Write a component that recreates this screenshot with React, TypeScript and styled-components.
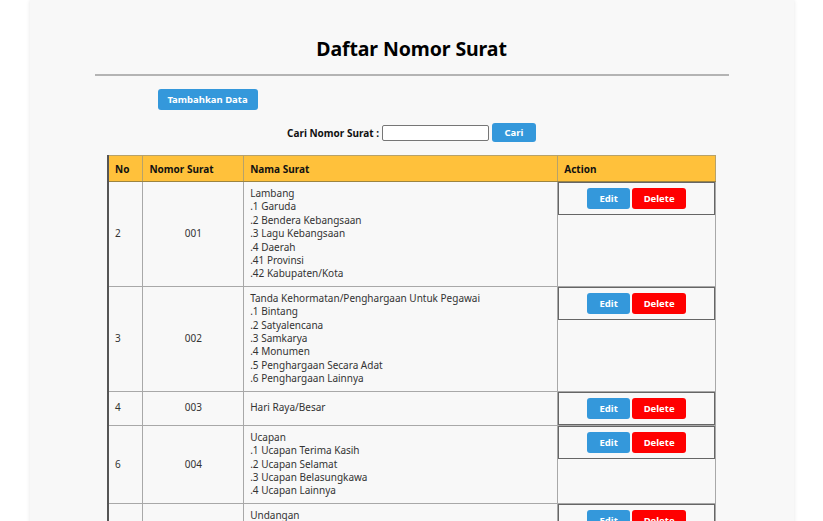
import React from "react";
import styled, { createGlobalStyle } from "styled-components";

const Global = createGlobalStyle`
  html, body { margin: 0; padding: 0; background: #ffffff; }
  body { font-family: "Noto Sans", "Open Sans", sans-serif; }
  * { box-sizing: border-box; }
`;

const Page = styled.div`
  width: 764px;
  margin: 0 auto;
  min-height: 521px;
  background: #f8f8f8;
  box-shadow: 0 0 4px rgba(0, 0, 0, 0.1);
  padding-top: 35px;
  display: flex;
  flex-direction: column;
  align-items: center;
`;

const Title = styled.h2`
  margin: 0;
  font-size: 19.5px;
  line-height: 28px;
  font-weight: 700;
  color: #000;
  letter-spacing: -0.1px;
`;

const Rule = styled.hr`
  width: 634px;
  margin: 11px 0 0;
  border: 0;
  border-top: 2px solid #b4b4b4;
`;

const AddRow = styled.div`
  align-self: stretch;
  padding-left: 128px;
  margin-top: 10px;
`;

const Btn = styled.button<{ $variant: "blue" | "red" }>`
  border: 0;
  border-radius: 3px;
  background: ${(p) => (p.$variant === "red" ? "#ff0000" : "#3498db")};
  color: #fff;
  font-family: "Noto Sans", "Open Sans", sans-serif;
  font-weight: 700;
  font-size: 9.5px;
  padding: 0;
  cursor: pointer;
  display: inline-flex;
  align-items: center;
  justify-content: center;
`;

const AddBtn = styled(Btn)`
  width: 100px;
  height: 21px;
`;

const SearchRow = styled.form`
  display: flex;
  align-items: center;
  margin-top: 13px;
  gap: 3px;
`;

const SearchLabel = styled.label`
  font-weight: 700;
  font-size: 10px;
  color: #111;
`;

const SearchInput = styled.input`
  width: 107px;
  height: 16px;
  border: 1px solid #767676;
  border-radius: 2px;
  background: #fff;
  padding: 0 2px;
`;

const SearchBtn = styled(Btn)`
  width: 44px;
  height: 19px;
`;

const Table = styled.table`
  margin-top: 13px;
  width: 609px;
  border-collapse: collapse;
  font-size: 10px;
  color: #333;
  border-left: 2px solid #555;
`;

const Th = styled.th<{ $w: number }>`
  width: ${(p) => p.$w}px;
  background: #ffc13b;
  text-align: left;
  font-weight: 700;
  font-size: 10px;
  color: #111;
  height: 26px;
  padding: 0 6px;
  border: 1px solid #b7a26a;
  border-bottom: 1px solid #9c8440;
`;

const Td = styled.td<{ $align?: string }>`
  border: 1px solid #a8a8a8;
  padding: 5px 6px;
  text-align: ${(p) => p.$align || "left"};
  vertical-align: middle;
  line-height: 13.4px;
`;

const ActionTd = styled.td`
  border: 1px solid #a8a8a8;
  padding: 0;
  vertical-align: top;
`;

const ActionBox = styled.div`
  border: 1px solid #666;
  height: 33px;
  display: flex;
  align-items: center;
  justify-content: center;
  gap: 2px;
`;

const EditBtn = styled(Btn)`
  width: 43px;
  height: 21px;
`;

const DeleteBtn = styled(Btn)`
  width: 54px;
  height: 21px;
`;

const Line = styled.div``;

const rows = [
  {
    no: "2",
    nomor: "001",
    nama: [
      "Lambang",
      ".1 Garuda",
      ".2 Bendera Kebangsaan",
      ".3 Lagu Kebangsaan",
      ".4 Daerah",
      ".41 Provinsi",
      ".42 Kabupaten/Kota",
    ],
  },
  {
    no: "3",
    nomor: "002",
    nama: [
      "Tanda Kehormatan/Penghargaan Untuk Pegawai",
      ".1 Bintang",
      ".2 Satyalencana",
      ".3 Samkarya",
      ".4 Monumen",
      ".5 Penghargaan Secara Adat",
      ".6 Penghargaan Lainnya",
    ],
  },
  { no: "4", nomor: "003", nama: ["Hari Raya/Besar"] },
  {
    no: "6",
    nomor: "004",
    nama: [
      "Ucapan",
      ".1 Ucapan Terima Kasih",
      ".2 Ucapan Selamat",
      ".3 Ucapan Belasungkawa",
      ".4 Ucapan Lainnya",
    ],
  },
  {
    no: "7",
    nomor: "005",
    nama: ["Undangan", ".1 Undangan Resmi", ".2 Undangan Tidak Resmi"],
  },
];

export default function App() {
  return (
    <>
      <Global />
      <Page>
        <Title>Daftar Nomor Surat</Title>
        <Rule />
        <AddRow>
          <AddBtn $variant="blue">Tambahkan Data</AddBtn>
        </AddRow>
        <SearchRow onSubmit={(e) => e.preventDefault()}>
          <SearchLabel>Cari Nomor Surat :</SearchLabel>
          <SearchInput type="text" />
          <SearchBtn $variant="blue">Cari</SearchBtn>
        </SearchRow>
        <Table>
          <thead>
            <tr>
              <Th $w={35}>No</Th>
              <Th $w={101}>Nomor Surat</Th>
              <Th $w={315}>Nama Surat</Th>
              <Th $w={158}>Action</Th>
            </tr>
          </thead>
          <tbody>
            {rows.map((r) => (
              <tr key={r.no}>
                <Td>{r.no}</Td>
                <Td $align="center">{r.nomor}</Td>
                <Td>
                  {r.nama.map((n) => (
                    <Line key={n}>{n}</Line>
                  ))}
                </Td>
                <ActionTd>
                  <ActionBox>
                    <EditBtn $variant="blue">Edit</EditBtn>
                    <DeleteBtn $variant="red">Delete</DeleteBtn>
                  </ActionBox>
                </ActionTd>
              </tr>
            ))}
          </tbody>
        </Table>
      </Page>
    </>
  );
}
